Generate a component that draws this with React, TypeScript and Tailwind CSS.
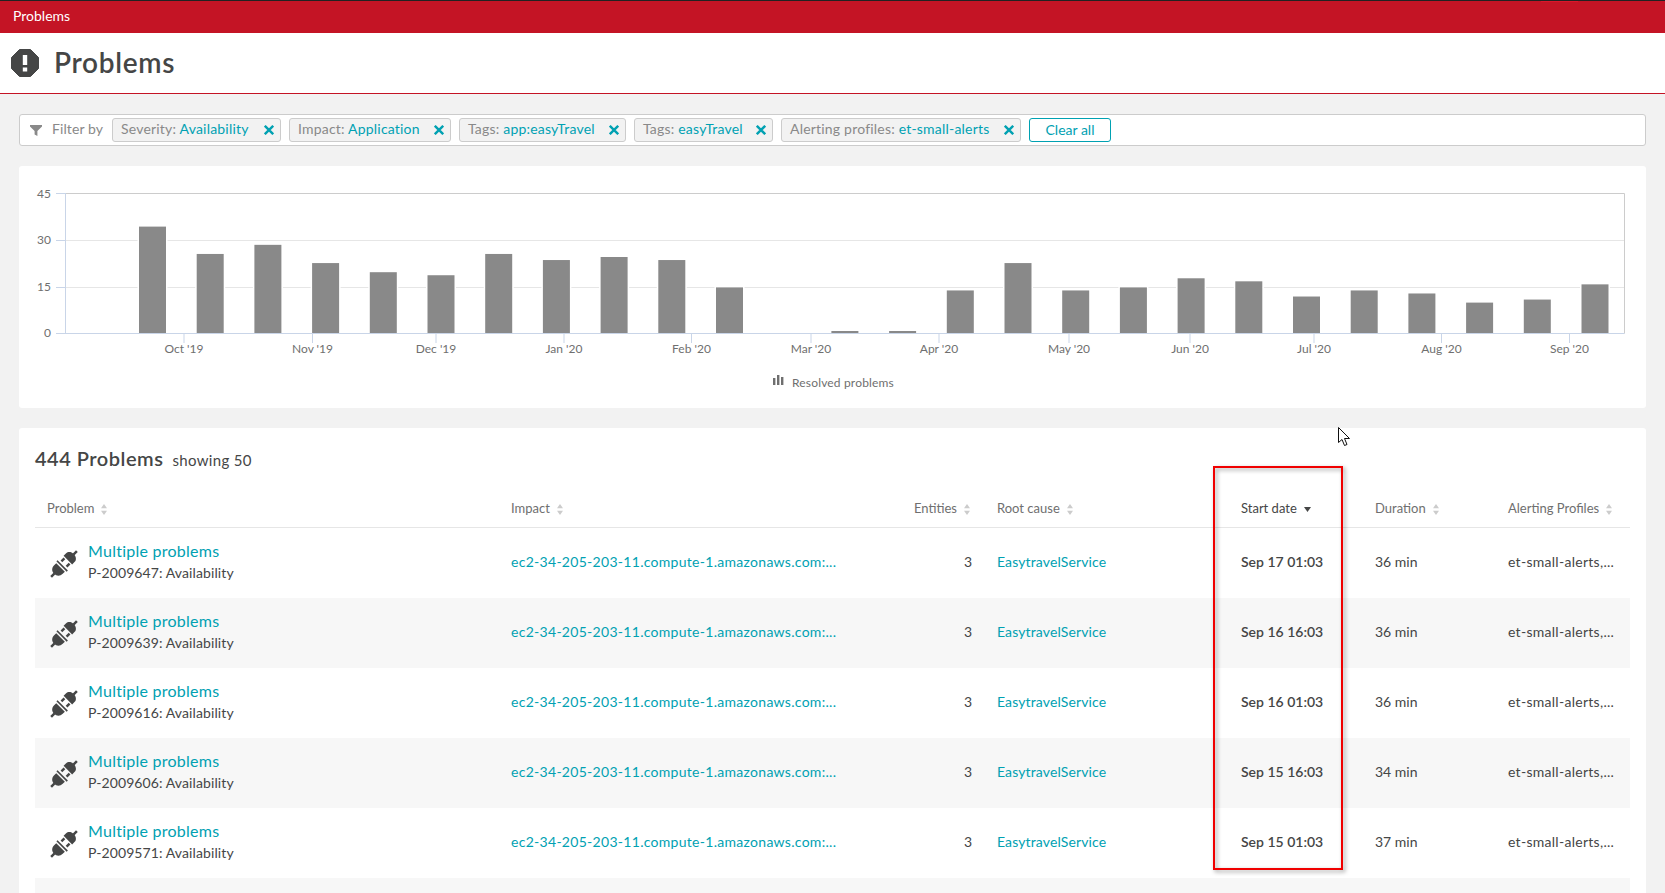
import type { ReactNode } from "react";

const FONT = "[font-family:Lato,'Noto_Sans',sans-serif]";

const chips = [
  { label: "Severity:", value: "Availability", w: "w-[169px]" },
  { label: "Impact:", value: "Application", w: "w-[162px]" },
  { label: "Tags:", value: "app:easyTravel", w: "w-[167px]" },
  { label: "Tags:", value: "easyTravel", w: "w-[139px]" },
  { label: "Alerting profiles:", value: "et-small-alerts", w: "w-[240px]" },
];

// bar values per two-week bucket, first bar starts at x=139
const barValues = [35, 26, 29, 23, 20, 19, 26, 24, 25, 24, 15, 0, 1, 1, 14, 23, 14, 15, 18, 17, 12, 14, 13, 10, 11, 16];
const months = [
  { x: 184, label: "Oct '19" },
  { x: 312.5, label: "Nov '19" },
  { x: 436, label: "Dec '19" },
  { x: 564, label: "Jan '20" },
  { x: 691.5, label: "Feb '20" },
  { x: 811, label: "Mar '20" },
  { x: 939, label: "Apr '20" },
  { x: 1069, label: "May '20" },
  { x: 1190, label: "Jun '20" },
  { x: 1314, label: "Jul '20" },
  { x: 1441.5, label: "Aug '20" },
  { x: 1569.5, label: "Sep '20" },
];

const rows = [
  { id: "P-2009647", start: "Sep 17 01:03", duration: "36 min" },
  { id: "P-2009639", start: "Sep 16 16:03", duration: "36 min" },
  { id: "P-2009616", start: "Sep 16 01:03", duration: "36 min" },
  { id: "P-2009606", start: "Sep 15 16:03", duration: "34 min" },
  { id: "P-2009571", start: "Sep 15 01:03", duration: "37 min" },
];

const COLS = "grid grid-cols-[464px_349px_112px_269px_134px_133px_110px] px-3";

function ProblemOctagon() {
  return (
    <svg viewBox="0 0 28 28" width="28" height="28">
      <path d="M8.5 0.5h11l8 8v11l-8 8h-11l-8-8v-11z" fill="#454646" stroke="#454646" strokeLinejoin="round" />
      <rect x="11.8" y="6" width="4.4" height="10" fill="#fff" />
      <rect x="11.8" y="18.5" width="4.4" height="4" fill="#fff" />
    </svg>
  );
}

function FilterIcon() {
  return (
    <svg viewBox="0 0 12 11" width="12" height="11" className="shrink-0">
      <path d="M0 0h12v1.6L7.4 6v5L4.6 9.4V6L0 1.6z" fill="#898989" />
    </svg>
  );
}

function CloseIcon() {
  return (
    <svg viewBox="0 0 10 10" width="10" height="10" className="relative left-[1px] shrink-0">
      <path d="M0.8 0.8l8.4 8.4M9.2 0.8l-8.4 8.4" stroke="#00a1b2" strokeWidth="2.4" fill="none" />
    </svg>
  );
}

function SortIcon() {
  return (
    <svg viewBox="0 0 6 11" width="6" height="11" className="ml-[7px] shrink-0">
      <path d="M3 0l3 4.2H0zM3 11L0 6.8h6z" fill="#cccccc" />
    </svg>
  );
}

function SortDownIcon() {
  return (
    <svg viewBox="0 0 7 5" width="7" height="5" className="ml-[7px] shrink-0">
      <path d="M0 0h7L3.5 5z" fill="#454646" />
    </svg>
  );
}

function PlugIcon() {
  return (
    <svg viewBox="0 0 28 28" width="34" height="34" className="shrink-0">
      <g transform="rotate(45 14 14)" fill="#454646">
        <rect x="13" y="-1" width="2" height="4" />
        <path d="M9 9.5V6.5C9 4.5 11 2.5 14 2.5s5 2 5 4V9.5z" />
        <rect x="10" y="10.5" width="2" height="3.5" />
        <rect x="16" y="10.5" width="2" height="3.5" />
        <rect x="8" y="15.5" width="12" height="1.4" />
        <path d="M9 18h10v2.5c0 3-2 5-5 5s-5-2-5-5z" />
        <rect x="13" y="25" width="2" height="4" />
      </g>
    </svg>
  );
}

function HeaderCell({ children, className = "" }: { children: ReactNode; className?: string }) {
  return <div className={"flex items-center text-[13px] text-[#6f6f6f] " + className}>{children}</div>;
}

function Chart() {
  const base = 333;
  return (
    <svg viewBox="19 166 1627 242" width="1627" height="242" className="block">
      <g stroke="#e6e6e6">
        <line x1="65" x2="1624" y1="240.5" y2="240.5" />
        <line x1="65" x2="1624" y1="287.5" y2="287.5" />
      </g>
      {barValues.map((v, i) => {
        const x = 139 + i * 57.7;
        const h = v === 1 ? 2 : v * 3.04;
        if (!v) return null;
        return (
          <g key={i}>
            <rect x={x - 1.5} y={base - h - 1} width={30} height={h + 1} fill="#fff" />
            <rect x={x} y={base - h} width={27} height={h} fill="#898989" />
          </g>
        );
      })}
      <path d="M65 193.5H1624.5V333.5" fill="none" stroke="#cccccc" />
      <path d="M56 193.5H65M56 240.5H65M56 287.5H65M56 333.5H1624.5M65.5 193V334" fill="none" stroke="#c9d5e8" />
      {[
        { y: 197.5, t: "45" },
        { y: 243.5, t: "30" },
        { y: 290.5, t: "15" },
        { y: 336.5, t: "0" },
      ].map(a => (
        <text key={a.t} x="51" y={a.y} textAnchor="end" fontSize="12" fill="#6f6f6f" fontFamily="Lato, sans-serif">
          {a.t}
        </text>
      ))}
      {months.map(m => (
        <g key={m.label}>
          <line x1={m.x} x2={m.x} y1="334" y2="343" stroke="#c9d5e8" />
          <text x={m.x} y="353" textAnchor="middle" fontSize="12" fill="#6f6f6f" fontFamily="Lato, sans-serif">
            {m.label}
          </text>
        </g>
      ))}
      <g fill="#6f6f6f">
        <rect x="773" y="378" width="2.4" height="7" />
        <rect x="777" y="375" width="2.4" height="10" />
        <rect x="781" y="377" width="2.4" height="8" />
      </g>
      <text x="792" y="387" fontSize="12" letterSpacing="0.17" fill="#6f6f6f" fontFamily="Lato, sans-serif">
        Resolved problems
      </text>
    </svg>
  );
}

export default function App() {
  return (
    <div className={"relative h-[893px] overflow-hidden bg-[#f2f2f2] text-[#454646] " + FONT}>
      {/* top bar */}
      <div className="relative h-[33px] border-t border-[#222] bg-[#c41425] pl-[13px] text-[14px] leading-[29px] text-white">
        Problems
        <div className="absolute left-[1541px] top-0 h-px w-[37px] bg-[#dc172a]" />
      </div>

      {/* page heading */}
      <div className="flex h-[61px] items-center gap-[15px] border-b border-[#c41425] bg-white pl-[11px]">
        <ProblemOctagon />
        <h1 className="pb-[2px] text-[28px] font-semibold leading-none tracking-[0.7px] text-[#454646]">Problems</h1>
      </div>

      <div className="px-[19px] pt-[20px]">
        {/* filter bar */}
        <div className="flex h-[32px] w-[1627px] items-center rounded-[3px] border border-[#cccccc] bg-white pl-[10px] text-[14px]">
          <FilterIcon />
          <span className="ml-[10px] w-[60px] pb-[3px] tracking-[0.1px] text-[#898989]">Filter by</span>
          <div className="flex items-center gap-[8px]">
            {chips.map(c => (
              <div
                key={c.value}
                className={"flex h-[24px] items-center justify-between rounded-[3px] border border-[#cccccc] bg-[#f2f2f2] pl-[8px] pr-[7px] " + c.w}
              >
                <span className="pb-[3px] tracking-[0.2px] text-[#898989]">
                  {c.label} <span className="text-[#00a1b2]">{c.value}</span>
                </span>
                <CloseIcon />
              </div>
            ))}
            <button
              type="button"
              className="h-[24px] w-[82px] rounded-[3px] border border-[#00a1b2] bg-white pb-[4px] text-[14px] text-[#00a1b2]"
            >
              Clear all
            </button>
          </div>
        </div>

        {/* chart */}
        <div className="mt-[20px] h-[242px] w-[1627px] rounded-[3px] bg-white">
          <Chart />
        </div>

        {/* table */}
        <div className="mt-[20px] w-[1627px] rounded-[3px] bg-white px-[16px] pt-[19px]">
          <div className="flex h-[22px] items-baseline">
            <span className="text-[20px] font-semibold leading-[22px] tracking-[0.5px]">444 Problems</span>
            <span className="ml-[9px] text-[15px] leading-[22px] tracking-[0.35px]">showing 50</span>
          </div>

          <div className={COLS + " mt-[22px] h-[37px] items-center border-b border-[#e6e6e6]"}>
            <HeaderCell>Problem<SortIcon /></HeaderCell>
            <HeaderCell>Impact<SortIcon /></HeaderCell>
            <HeaderCell className="justify-end pr-[2px]">Entities<SortIcon /></HeaderCell>
            <HeaderCell className="pl-[25px]">Root cause<SortIcon /></HeaderCell>
            <HeaderCell className="text-[#454646]">Start date<SortDownIcon /></HeaderCell>
            <HeaderCell>Duration<SortIcon /></HeaderCell>
            <HeaderCell className="whitespace-nowrap">Alerting Profiles<SortIcon /></HeaderCell>
          </div>

          {rows.map((r, i) => (
            <div key={r.id} className={COLS + " h-[70px] items-center pb-[4px] text-[14px] " + (i % 2 ? "bg-[#f7f7f7]" : "bg-white")}>
              <div className="flex items-center">
                <div className="mr-[7px] mt-[6px]">
                  <PlugIcon />
                </div>
                <div>
                  <div className="text-[16px] leading-[22px] tracking-[0.25px] text-[#00a1b2]">Multiple problems</div>
                  <div className="leading-[21px] tracking-[0.1px]">{r.id}: Availability</div>
                </div>
              </div>
              <div className="whitespace-nowrap tracking-[0.29px] text-[#00a1b2]">ec2-34-205-203-11.compute-1.amazonaws.com:...</div>
              <div className="text-right">3</div>
              <div className="pl-[25px] tracking-[0.12px] text-[#00a1b2]">EasytravelService</div>
              <div className="font-semibold">{r.start}</div>
              <div>{r.duration}</div>
              <div className="whitespace-nowrap tracking-[0.28px]">et-small-alerts,...</div>
            </div>
          ))}
          <div className={COLS + " h-[70px] bg-[#f7f7f7]"} />
        </div>
      </div>

      {/* annotation box drawn over the start date column */}
      <div className="absolute left-[1213px] top-[466px] h-[404px] w-[130px] border-2 border-[#f00000] [filter:drop-shadow(2px_2px_2px_rgba(0,0,0,0.4))]" />

      {/* mouse pointer caught in the capture */}
      <svg viewBox="0 0 13 20" width="13" height="20" className="absolute left-[1338px] top-[427px]">
        <path d="M0.5 0.5V15.5L4 12.5L6.5 18.5L9 17.5L6.5 11.5H11.5z" fill="#fff" stroke="#111" strokeWidth="1" strokeLinejoin="round" />
      </svg>
    </div>
  );
}
